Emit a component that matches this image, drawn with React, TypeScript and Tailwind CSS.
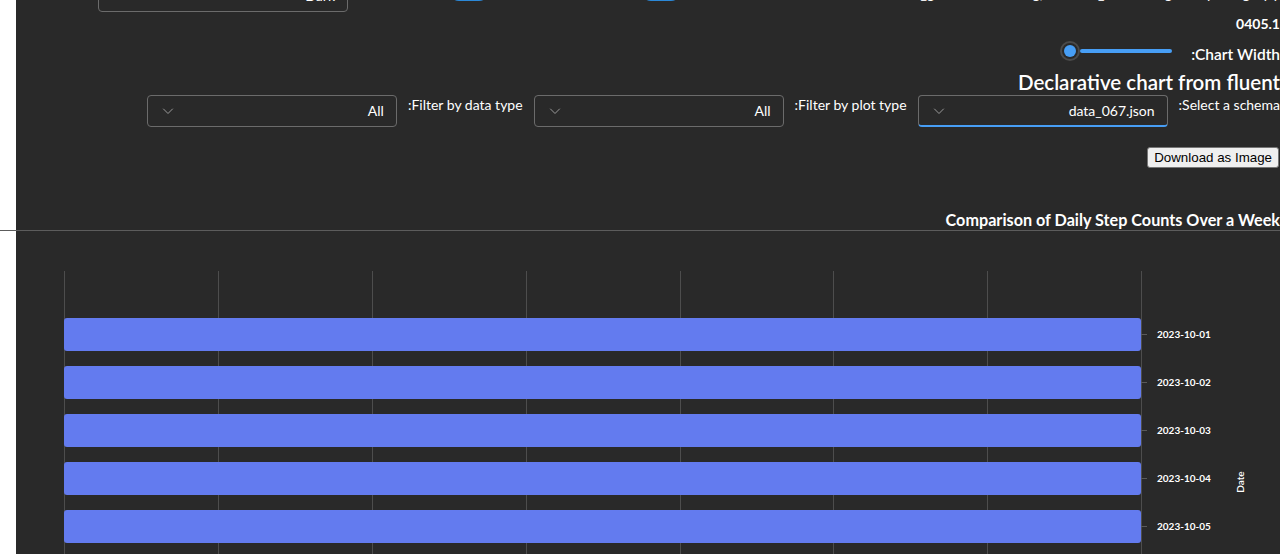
import React from "react";

const dates = ["2023-10-01", "2023-10-02", "2023-10-03", "2023-10-04", "2023-10-05", "2023-10-06", "2023-10-07"];
const gridX = [48, 202, 356, 510, 664, 817, 971, 1125];

const Chevron = () => (
  <svg width="12" height="12" viewBox="0 0 12 12" fill="none">
    <path d="M1.5 4 L6 8.5 L10.5 4" stroke="#9a9a9a" strokeWidth="1" strokeLinecap="round" strokeLinejoin="round" />
  </svg>
);

const Dropdown = ({ value, focused, className = "" }: { value: string; focused?: boolean; className?: string }) => (
  <div
    className={`flex h-8 w-[250px] shrink-0 items-center justify-between rounded border border-[#6b6b6b] pr-3 pl-[14px] ${
      focused ? "border-b-2 border-b-[#479ef5]" : ""
    } ${className}`}>
    <span className="text-sm text-white">{value}</span>
    <Chevron />
  </div>
);

const Switch = ({ className = "" }: { className?: string }) => (
  <div className={`flex h-5 w-10 shrink-0 items-center justify-start rounded-full bg-[#2b88d8] px-[3px] ${className}`}>
    <div className="h-[14px] w-[14px] rounded-full bg-[#292929]" />
  </div>
);

const Label = ({ children }: { children: React.ReactNode }) => (
  <span className="shrink-0 text-sm leading-5 text-white">{children}</span>
);

const App = () => {
  return (
    <div className="flex h-[554px] w-[1280px] flex-col overflow-hidden bg-white font-['Lato','Noto_Sans',sans-serif]">
      <div className="flex h-[230px] shrink-0">
        <div className="w-4 shrink-0" />
        <div dir="rtl" className="flex flex-1 flex-col items-start overflow-hidden bg-[#292929] text-white">
          <div className="-mt-[28px] flex h-10 w-full shrink-0 items-end">
            <span className="mb-[8px] w-[590px] shrink-0 truncate text-sm leading-5">
              Enable_gradient rendering, rounded_corners legend by category y
            </span>
            <Switch className="mb-[11px] mr-[9px]" />
            <span className="w-[152px] shrink-0" />
            <Switch className="mb-[11px]" />
            <Dropdown value="Dark" className="mr-[101px]" />
          </div>

          <div className="mt-[2px] text-sm font-bold leading-5">0405.1</div>

          <div className="mt-1 flex h-7 items-start">
            <span className="mt-[6px] text-[15.5px] font-semibold leading-5">Chart Width:</span>
            <div dir="ltr" className="mr-[19px] mt-[3px] flex h-5 w-[112px] items-center">
              <div className="flex h-5 w-5 shrink-0 items-center justify-center rounded-full border-2 border-[#4a4a4a] bg-[#292929]">
                <div className="h-3 w-3 rounded-full bg-[#479ef5]" />
              </div>
              <div className="h-1 flex-1 rounded-full bg-[#479ef5]" />
            </div>
          </div>

          <h2 className="mt-[3px] text-[20.5px] font-semibold leading-[26px]">Declarative chart from fluent</h2>

          <div className="flex h-8 items-start gap-[11px]">
            <Label>Select a schema:</Label>
            <Dropdown value="data_067.json" focused />
            <Label>Filter by plot type:</Label>
            <Dropdown value="All" />
            <Label>Filter by data type:</Label>
            <Dropdown value="All" />
          </div>

          <button
            dir="ltr"
            className="mr-px mt-5 h-[21px] rounded-[3px] border border-[#767676] bg-[#efefef] px-[6px] font-['Liberation_Sans',Arial,sans-serif] text-[13.333px] leading-[15px] text-black">
            Download as Image
          </button>

          <div className="mt-[42px] text-[16.2px] font-bold leading-5">Comparison of Daily Step Counts Over a Week</div>
        </div>
      </div>

      <div className="h-px w-full shrink-0 bg-[#5c5c5c]" />

      <div className="flex flex-1">
        <div className="w-4 shrink-0" />
        <div className="flex-1 bg-[#292929]">
          <svg width="1264" height="323" viewBox="0 0 1264 323">
            {gridX.map((x) => (
              <line key={x} x1={x + 0.5} y1={40} x2={x + 0.5} y2={323} stroke="#4d4d4d" strokeWidth="1" />
            ))}
            {dates.map((d, i) => {
              const y = 87 + 48 * i;
              return (
                <g key={d}>
                  <rect x={48} y={y} width={1077} height={33} rx={3} fill="#637bef" />
                  <line x1={1125} y1={y + 16.5} x2={1131} y2={y + 16.5} stroke="#5a5a5a" strokeWidth="1" />
                  <text
                    x={1141}
                    y={y + 17.5}
                    dominantBaseline="middle"
                    fill="#ffffff"
                    fontSize="10"
                    fontWeight="700"
                    fontFamily="Lato, 'Noto Sans', sans-serif">
                    {d}
                  </text>
                </g>
              );
            })}
            <text
              x={1225}
              y={251}
              transform="rotate(-90 1225 251)"
              textAnchor="middle"
              dominantBaseline="middle"
              fill="#ffffff"
              fontSize="10"
              fontWeight="600"
              fontFamily="Lato, 'Noto Sans', sans-serif">
              Date
            </text>
          </svg>
        </div>
      </div>
    </div>
  );
};

export default App;
